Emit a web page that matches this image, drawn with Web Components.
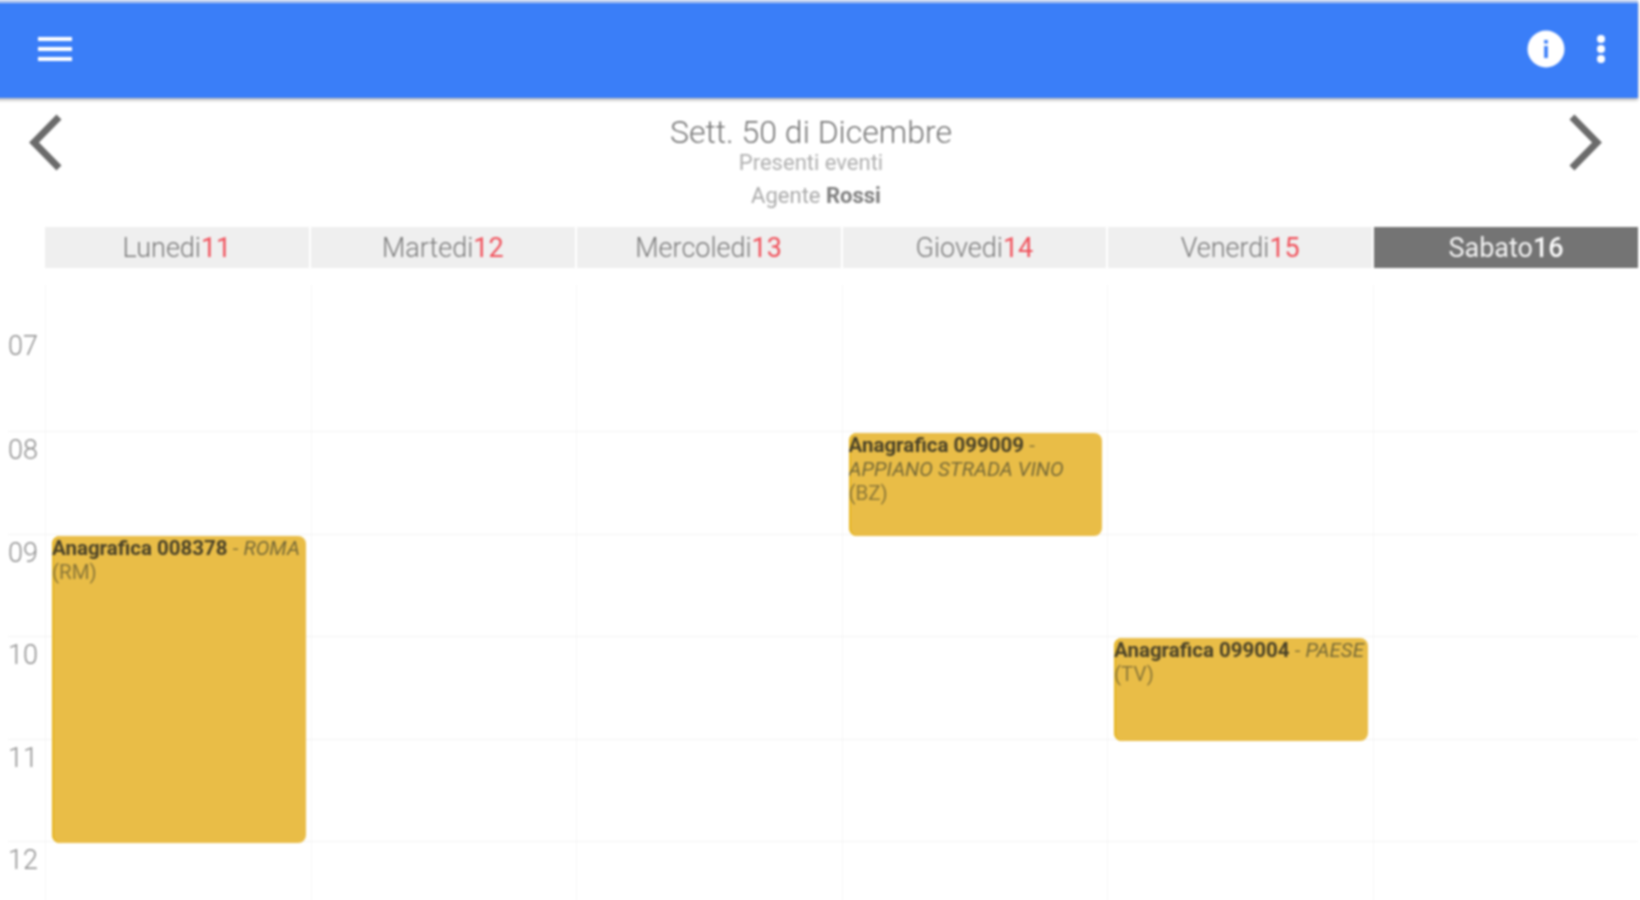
<!DOCTYPE html>
<html lang="it">
<head>
<meta charset="utf-8">
<title>Agenda</title>
<style>
  html, body { margin: 0; height: 100%; overflow: hidden; background: #fff; }
  body { font-family: Roboto, "Liberation Sans", sans-serif; }
  cal-app { width: 1638px; height: 900px; }
</style>
</head>
<body>
<cal-app>
  <app-bar></app-bar>
  <week-nav agent="Rossi">
    <span slot="title">Sett. 50 di Dicembre</span>
    <span slot="subtitle">Presenti eventi</span>
  </week-nav>
  <day-strip>
    <day-tab name="Lunedi" num="11"></day-tab>
    <day-tab name="Martedi" num="12"></day-tab>
    <day-tab name="Mercoledi" num="13"></day-tab>
    <day-tab name="Giovedi" num="14"></day-tab>
    <day-tab name="Venerdi" num="15"></day-tab>
    <day-tab name="Sabato" num="16" active></day-tab>
  </day-strip>
  <week-grid>
    <cal-event day="1" hour="2" span="3" code="Anagrafica 008378" place="ROMA" prov="(RM)"></cal-event>
    <cal-event day="4" hour="1" span="1" code="Anagrafica 099009" place="APPIANO STRADA VINO" prov="(BZ)"></cal-event>
    <cal-event day="5" hour="3" span="1" code="Anagrafica 099004" place="PAESE" prov="(TV)"></cal-event>
  </week-grid>
</cal-app>

<script>
class CalApp extends HTMLElement {
  constructor() {
    super();
    this.attachShadow({ mode: "open" });
    this.shadowRoot.innerHTML = `
      <style>
        :host { display: flex; flex-direction: column; filter: blur(1px); }
        ::slotted(*) { flex: none; }
      </style>
      <slot></slot>
    `;
  }
}

class AppBar extends HTMLElement {
  constructor() {
    super();
    this.attachShadow({ mode: "open" });
    // il margine negativo evita che la sfocatura schiarisca il bordo sinistro
    this.shadowRoot.innerHTML = `
      <style>
        :host {
          display: flex;
          align-items: center;
          justify-content: space-between;
          box-sizing: border-box;
          height: 98px;
          margin-left: -4px;
          border-top: 3px solid #b4c8ee;
          padding: 0 32px 3px 42px;
          background: #3a7ef8;
          box-shadow: 0 2px 3px rgba(0, 0, 0, 0.3);
          position: relative;
        }
        .right { display: flex; align-items: center; gap: 31px; }
        svg { display: block; }
      </style>
      <svg width="34" height="28" viewBox="0 0 34 28" fill="#fff">
        <rect x="0" y="2" width="34" height="4"/>
        <rect x="0" y="12" width="34" height="4"/>
        <rect x="0" y="22" width="34" height="4"/>
      </svg>
      <div class="right">
        <svg width="38" height="38" viewBox="0 0 38 38">
          <circle cx="19" cy="19" r="18.5" fill="#fff"/>
          <rect x="17.2" y="16" width="3.6" height="12" fill="#3a7ef8"/>
          <rect x="17.2" y="10" width="3.6" height="3.6" fill="#3a7ef8"/>
        </svg>
        <svg width="10" height="30" viewBox="0 0 10 30" fill="#fff">
          <circle cx="5" cy="5" r="4"/>
          <circle cx="5" cy="15" r="4"/>
          <circle cx="5" cy="25" r="4"/>
        </svg>
      </div>
    `;
  }
}

class WeekNav extends HTMLElement {
  constructor() {
    super();
    this.attachShadow({ mode: "open" });
    const agent = this.getAttribute("agent");
    this.shadowRoot.innerHTML = `
      <style>
        :host {
          display: flex;
          justify-content: space-between;
          align-items: flex-start;
          box-sizing: border-box;
          height: 129px;
          padding: 15px 35px 0 28px;
          color: #757575;
        }
        svg { display: block; margin-top: 1px; }
        .mid { flex: 1; display: flex; flex-direction: column; align-items: center; font-weight: 300; padding-right: 9px; }
        .title { font-size: 32px; line-height: 38px; }
        .sub { font-size: 22px; line-height: 22px; margin-top: 1px; font-weight: 400; color: #b0b0b0; }
        .agent { font-size: 22px; line-height: 24px; margin: 10px 0 0 10px; font-weight: 400; color: #aaaaaa; }
        .agent b { color: #7f7f7f; font-weight: 700; }
      </style>
      <svg width="40" height="60" viewBox="0 0 40 60"><path d="M31 3 L6 28.5 L31 54" fill="none" stroke="#6b6b6b" stroke-width="7"/></svg>
      <div class="mid">
        <span class="title"><slot name="title"></slot></span>
        <span class="sub"><slot name="subtitle"></slot></span>
        <span class="agent">Agente <b>${agent}</b></span>
      </div>
      <svg width="40" height="60" viewBox="0 0 40 60"><path d="M9 3 L34 28.5 L9 54" fill="none" stroke="#6b6b6b" stroke-width="7"/></svg>
    `;
  }
}

class DayStrip extends HTMLElement {
  constructor() {
    super();
    this.attachShadow({ mode: "open" });
    this.shadowRoot.innerHTML = `
      <style>
        :host {
          display: grid;
          grid-template-columns: repeat(6, 1fr);
          column-gap: 2px;
          padding-left: 45px;
          height: 41px;
        }
      </style>
      <slot></slot>
    `;
  }
}

class DayTab extends HTMLElement {
  constructor() {
    super();
    this.attachShadow({ mode: "open" });
    this.shadowRoot.innerHTML = `
      <style>
        :host {
          display: flex;
          align-items: center;
          justify-content: center;
          background: #efefef;
          color: #7a7a7a;
          font-size: 27px;
          font-weight: 300;
        }
        :host([active]) { background: #747474; color: #f2f2f2; font-weight: 400; }
        b { color: #f0525c; font-weight: 400; }
        :host([active]) b { color: #fafafa; font-weight: 500; }
      </style>
      ${this.getAttribute("name")}<b>${this.getAttribute("num")}</b>
    `;
  }
}

class WeekGrid extends HTMLElement {
  constructor() {
    super();
    this.attachShadow({ mode: "open" });
    const hours = ["07", "08", "09", "10", "11", "12"];
    let cells = "";
    hours.forEach((h, i) => {
      cells += `<div class="hour" style="grid-row:${i + 1}">${h}</div>`;
      for (let c = 2; c <= 7; c++) {
        cells += `<div class="cell" style="grid-row:${i + 1};grid-column:${c}"></div>`;
      }
    });
    this.shadowRoot.innerHTML = `
      <style>
        :host {
          display: grid;
          grid-template-columns: 45px repeat(6, 1fr);
          grid-template-rows: 146px repeat(5, 102.5px);
          margin-top: 17px;
        }
        .hour {
          grid-column: 1;
          margin-left: 8px;
          font-size: 27px;
          font-weight: 300;
          line-height: 36px;
          color: #8c8c8c;
          border-top: 1px solid #f3f3f3;
        }
        .hour:first-of-type { border-top: 0; padding-top: 43px; }
        .cell { border-left: 1px solid #f7f7f7; border-top: 1px solid #f3f3f3; }
        .cell:nth-of-type(-n+7) { border-top: 0; }
      </style>
      ${cells}
      <slot></slot>
    `;
  }
}

class CalEvent extends HTMLElement {
  constructor() {
    super();
    this.attachShadow({ mode: "open" });
    this.style.gridColumn = Number(this.getAttribute("day")) + 1;
    this.style.gridRow = `${Number(this.getAttribute("hour")) + 1} / span ${this.getAttribute("span")}`;
    this.shadowRoot.innerHTML = `
      <style>
        :host {
          display: block;
          margin: 2px 5px -2px 7px;
          background: #e9bd47;
          border-radius: 8px;
          box-shadow: inset 2px 0 0 #e6b51f;
          font-size: 20.5px;
          line-height: 24px;
          color: #8a7638;
          overflow: hidden;
        }
        b { color: #4a4228; font-weight: 700; }
        i { color: #776a38; }
      </style>
      <b>${this.getAttribute("code")}</b> - <i>${this.getAttribute("place")}</i> ${this.getAttribute("prov")}
    `;
  }
}

customElements.define("cal-app", CalApp);
customElements.define("app-bar", AppBar);
customElements.define("week-nav", WeekNav);
customElements.define("day-strip", DayStrip);
customElements.define("day-tab", DayTab);
customElements.define("week-grid", WeekGrid);
customElements.define("cal-event", CalEvent);
</script>
</body>
</html>
